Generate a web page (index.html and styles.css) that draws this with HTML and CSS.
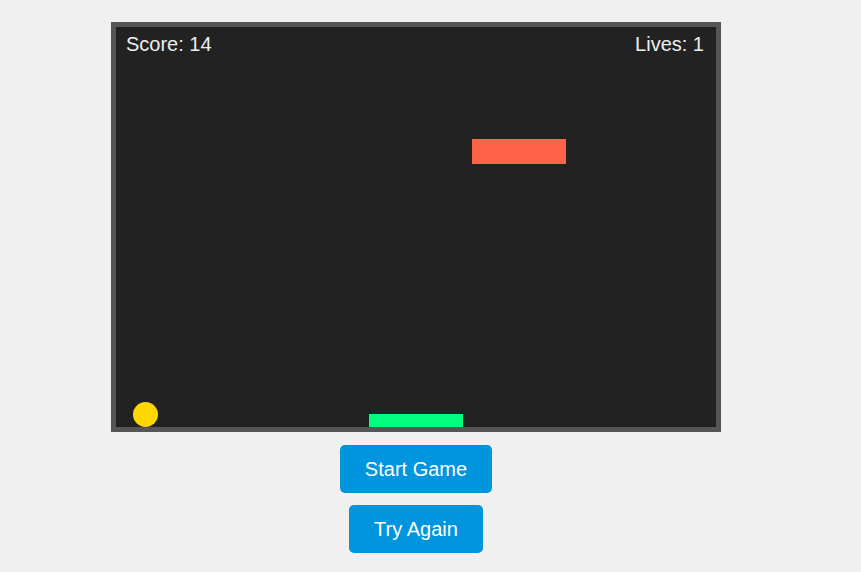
FILE: index.html
```html
<!DOCTYPE html>
<html>
<head>
<meta charset="utf-8">
<link rel="stylesheet" href="styles.css">
</head>
<body>
<div class="wrap">
  <div class="game">
    <div class="hud">
      <span class="score">Score: 14</span>
      <span class="lives">Lives: 1</span>
    </div>
    <div class="brick"></div>
    <div class="paddle"></div>
    <div class="ball"></div>
  </div>
  <div class="controls">
    <button class="btn">Start Game</button>
    <button class="btn">Try Again</button>
  </div>
</div>
</body>
</html>
```
FILE: styles.css
```css
html, body {
  margin: 0;
  padding: 0;
  background: #f0f0f0;
  font-family: "Liberation Sans", Arial, sans-serif;
}
.wrap {
  width: 832px;
  padding-top: 22px;
  display: flex;
  flex-direction: column;
  align-items: center;
}
.game {
  position: relative;
  width: 600px;
  height: 400px;
  background: #222222;
  border: 5px solid #555555;
}
.hud {
  display: flex;
  justify-content: space-between;
  padding: 7px 12px 0 10px;
  font-size: 20px;
  line-height: 20px;
  color: #eeeeee;
}
.brick {
  position: absolute;
  left: 356px;
  top: 112px;
  width: 94px;
  height: 25px;
  background: #ff6347;
}
.paddle {
  position: absolute;
  left: 253px;
  top: 387px;
  width: 94px;
  height: 13px;
  background: #00ff7f;
}
.ball {
  position: absolute;
  left: 17px;
  top: 375px;
  width: 25px;
  height: 25px;
  border-radius: 50%;
  background: #ffd700;
}
.controls {
  margin-top: 13px;
  display: flex;
  flex-direction: column;
  align-items: center;
  gap: 12px;
}
.btn {
  font-family: "Liberation Sans", Arial, sans-serif;
  font-size: 20px;
  line-height: 24px;
  padding: 12px 25px;
  border: none;
  border-radius: 5px;
  background: #0095dd;
  color: #ffffff;
  cursor: pointer;
}
```
